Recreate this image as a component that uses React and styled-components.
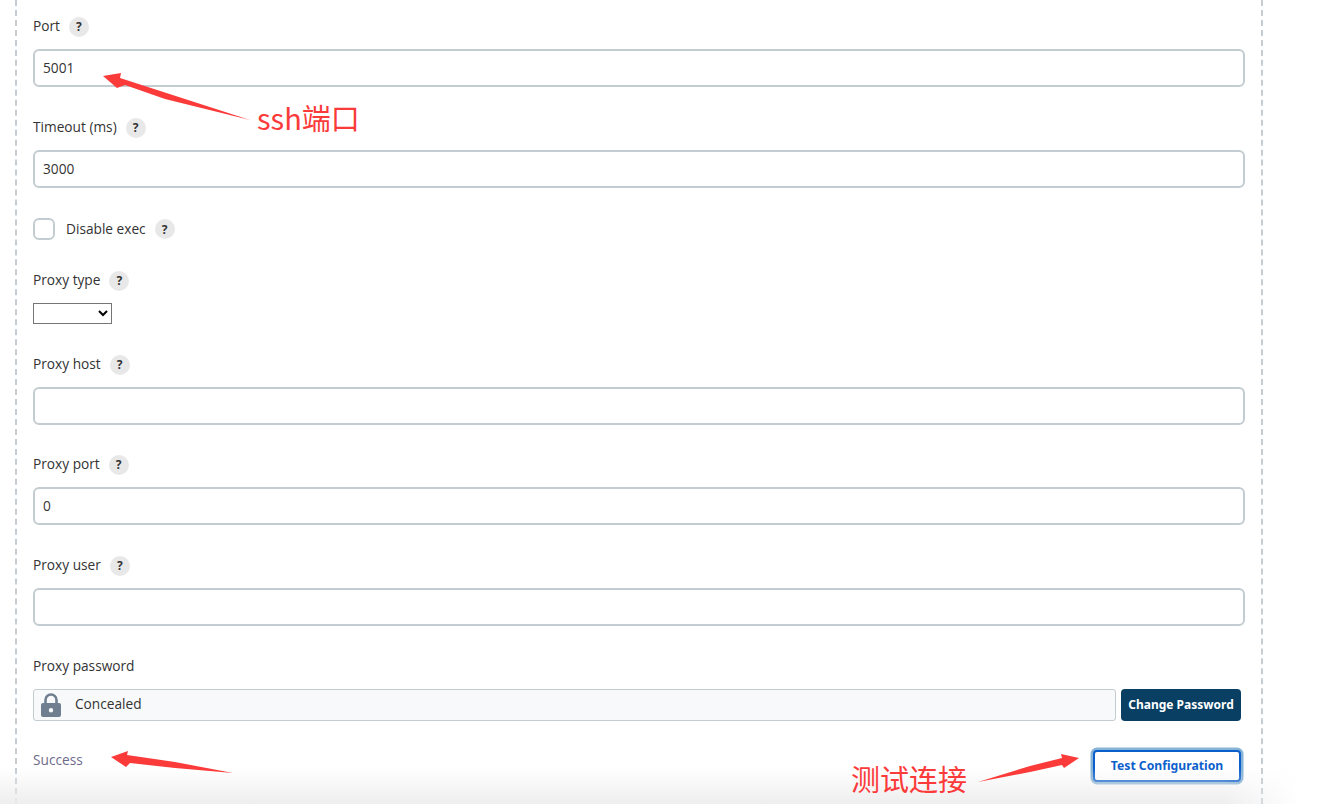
import React from "react";
import styled, { createGlobalStyle } from "styled-components";

const Global = createGlobalStyle`
  html, body { margin: 0; padding: 0; background: #fff; height: 807px; overflow: hidden; }
  body { font-family: "Open Sans", "Noto Sans", "Liberation Sans", sans-serif; font-size: 13.7px; color: #333; }
  * { box-sizing: border-box; }
`;

const Page = styled.div`
  position: relative;
  width: 1332px;
  height: 807px;
  overflow: hidden;
  background: #fff;
`;

const Section = styled.div`
  margin-left: 15px;
  width: 1248px;
  height: 804px;
  padding: 16px 16px 0 16px;
  border-left: 2px dashed #c5cdd3;
  border-right: 2px dashed #c5cdd3;
  display: flex;
  flex-direction: column;
`;

const Field = styled.div`
  display: flex;
  flex-direction: column;
  height: ${(p) => p.$h}px;
`;

const LabelRow = styled.div`
  display: flex;
  align-items: center;
  gap: 9px;
  height: 22px;
  line-height: 22px;
  margin-bottom: 11px;
  color: #333;
`;

const LabelText = styled.span`
  margin-bottom: 2px;
`;

const Help = styled.span`
  width: 20px;
  height: 20px;
  border-radius: 50%;
  background: #e8e8e8;
  color: #333;
  font-family: "Noto Sans", sans-serif;
  font-size: 12px;
  font-weight: 700;
  display: flex;
  align-items: center;
  justify-content: center;
`;

const TextBox = styled.input`
  width: 1212px;
  height: 38px;
  padding: 0 8px 2px;
  border: 2px solid #c3ccd1;
  border-radius: 6px;
  background: #fff;
  font: inherit;
  color: #333;
  outline: none;
`;

const CheckRow = styled.div`
  display: flex;
  align-items: center;
  height: 22px;
  gap: 11px;
`;

const Box = styled.span`
  width: 22px;
  height: 22px;
  border: 2px solid #c3ccd1;
  border-radius: 6px;
  background: #fff;
`;

const CheckLabel = styled.span`
  margin: 0 -2px 2px 0;
`;

const NativeSelect = styled.select`
  width: 79px;
  height: 21px;
  padding: 0;
  background: #fff;
  border: 1px solid #767676;
  border-radius: 0;
  font: inherit;
  display: block;
`;

const PasswordRow = styled.div`
  display: flex;
  align-items: center;
  height: 32px;
  gap: 5px;
`;

const Concealed = styled.div`
  width: 1083px;
  height: 32px;
  display: flex;
  align-items: center;
  gap: 14px;
  padding-left: 7px;
  background: #f8f9fa;
  border: 1px solid #c3ccd1;
  border-radius: 3px;
  color: #333;
`;

const ConcealedText = styled.span`
  margin-bottom: 3px;
`;

const Change = styled.button`
  width: 120px;
  height: 32px;
  padding: 0 0 2px;
  border: 0;
  border-radius: 4px;
  background: #083f63;
  color: #fff;
  font-family: "Noto Sans", sans-serif;
  font-size: 12px;
  font-weight: 700;
`;

const ResultRow = styled.div`
  display: flex;
  align-items: flex-start;
  justify-content: space-between;
  height: 36px;
  margin-top: 27px;
`;

const Success = styled.span`
  color: #6d6b8a;
  line-height: 22px;
  margin-top: 1px;
`;

const Test = styled.button`
  width: 148px;
  height: 32px;
  padding: 0 0 2px;
  background: #fff;
  color: #0b5fcc;
  border: 2px solid #0b5fcc;
  border-radius: 4px;
  box-shadow: 0 0 0 2.5px #86b3d6;
  font-family: "Noto Sans", sans-serif;
  font-size: 12.2px;
  font-weight: 700;
  margin: 2px 4px 0 0;
`;

const BottomFade = styled.div`
  position: absolute;
  left: 0;
  width: 1300px;
  top: 768px;
  height: 36px;
  background: linear-gradient(to bottom, rgba(236,236,236,0), rgba(236,236,236,0.9));
  mask-image: linear-gradient(to right, #000 94%, transparent);
  pointer-events: none;
`;

const Overlay = styled.svg`
  position: absolute;
  left: 0;
  top: 0;
  pointer-events: none;
`;

const Note = styled.span`
  position: absolute;
  left: ${(p) => p.$x}px;
  top: ${(p) => p.$y}px;
  font-family: "Noto Sans CJK SC", "Noto Sans", sans-serif;
  font-size: ${(p) => p.$size}px;
  line-height: 1;
  font-weight: 400;
  color: #fb3a3a;
  white-space: nowrap;
`;

const Q = () => <Help>?</Help>;

const Lock = () => (
  <svg width="20" height="24" viewBox="0 0 20 24">
    <path d="M4.500 11V7a5.500 5.500 0 0 1 11 0V11" fill="none" stroke="#6f7f90" strokeWidth="2.600" />
    <path fillRule="evenodd" d="M2 10h16a2 2 0 0 1 2 2V22a2 2 0 0 1-2 2H2a2 2 0 0 1-2-2V12a2 2 0 0 1 2-2zM10 15a2.200 2.200 0 1 0 0 4.400 2.200 2.200 0 0 0 0-4.400z" fill="#6f7f90" />
  </svg>
);

export default function App() {
  return (
    <Page>
      <Global />
      <Section>
        <Field $h={101}>
          <LabelRow><LabelText>Port</LabelText> <Q /></LabelRow>
          <TextBox defaultValue="5001" />
        </Field>
        <Field $h={101}>
          <LabelRow><LabelText>Timeout (ms)</LabelText> <Q /></LabelRow>
          <TextBox defaultValue="3000" />
        </Field>
        <Field $h={52}>
          <CheckRow>
            <Box />
            <CheckLabel>Disable exec</CheckLabel>
            <Q />
          </CheckRow>
        </Field>
        <Field $h={84}>
          <LabelRow><LabelText>Proxy type</LabelText> <Q /></LabelRow>
          <NativeSelect />
        </Field>
        <Field $h={100}>
          <LabelRow><LabelText>Proxy host</LabelText> <Q /></LabelRow>
          <TextBox />
        </Field>
        <Field $h={101}>
          <LabelRow><LabelText>Proxy port</LabelText> <Q /></LabelRow>
          <TextBox defaultValue="0" />
        </Field>
        <Field $h={101}>
          <LabelRow><LabelText>Proxy user</LabelText> <Q /></LabelRow>
          <TextBox />
        </Field>
        <Field $h={65}>
          <LabelRow><LabelText>Proxy password</LabelText></LabelRow>
          <PasswordRow>
            <Concealed><Lock /><ConcealedText>Concealed</ConcealedText></Concealed>
            <Change>Change Password</Change>
          </PasswordRow>
        </Field>
        <ResultRow>
          <Success>Success</Success>
          <Test>Test Configuration</Test>
        </ResultRow>
      </Section>
      <BottomFade />
      <Overlay width="1332" height="807" viewBox="0 0 1332 807">
        <g fill="#fb3a3a">
          <polygon points="103,76 121,73 120,78 250,120 165,99 125,85 117,88" />
          <polygon points="111,757 128,751 127,755 175,762 233,773 175,768 130,763 126,767" />
          <polygon points="1079,758 1061,754 1062,758 1030,766 978,782 1030,772 1062,765 1064,768" />
        </g>
      </Overlay>
      <Note $x={257} $y={103} $size={29}>ssh端口</Note>
      <Note $x={851} $y={764} $size={29}>测试连接</Note>
    </Page>
  );
}
